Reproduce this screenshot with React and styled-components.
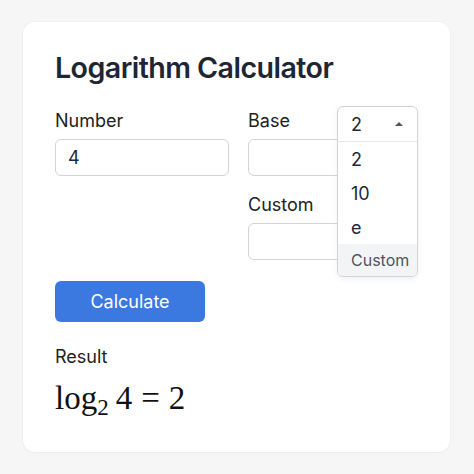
import React from 'react';
import styled, { createGlobalStyle } from 'styled-components';

const Global = createGlobalStyle`
  html, body {
    margin: 0;
    padding: 0;
    background: #f6f6f6;
  }
  * { box-sizing: border-box; }
`

const Page = styled.div`
  width: 474px;
  height: 474px;
  padding: 22px 24px 22px 23px;
  font-family: Inter, "Noto Sans", sans-serif;
  color: #1f2937;
`

const Card = styled.div`
  width: 427px;
  height: 430px;
  background: #ffffff;
  border-radius: 12px;
  box-shadow: 0 0 0 1px rgba(0, 0, 0, 0.015), 0 1px 3px rgba(0, 0, 0, 0.03);
  padding: 28px 32px;
`

const Title = styled.h1`
  margin: 0;
  font-size: 28.6px;
  line-height: 36px;
  font-weight: 600;
  color: #1e2633;
  letter-spacing: -0.55px;
`

const Grid = styled.div`
  display: grid;
  grid-template-columns: 174px 170px;
  column-gap: 19px;
  margin-top: 24px;
`

const Column = styled.div`
  display: flex;
  flex-direction: column;
  gap: 18px;
`

const Field = styled.div`
  position: relative;
  display: flex;
  flex-direction: column;
`

const Label = styled.label`
  font-size: 18px;
  line-height: 22px;
  color: #222;
  margin-bottom: 7px;
`

const Input = styled.input`
  width: 100%;
  height: 37px;
  border: 1px solid #d4d4d8;
  border-radius: 6px;
  padding: 0 12px;
  font-family: inherit;
  font-size: 18px;
  color: #1f2937;
  background: #fff;
  outline: none;
`

const Dropdown = styled.div`
  position: absolute;
  left: 89px;
  top: -4px;
  width: 81px;
  background: #fff;
  border: 1px solid #d4d4d8;
  border-radius: 6px;
  box-shadow: 0 2px 6px rgba(0, 0, 0, 0.06);
  overflow: hidden;
  z-index: 2;
`

const Selected = styled.div`
  height: 35px;
  display: flex;
  align-items: center;
  justify-content: space-between;
  padding: 0 14px 0 13px;
  font-size: 18px;
  border-bottom: 1px solid #e5e7eb;
`

const Caret = styled.span`
  width: 0;
  height: 0;
  border-left: 4px solid transparent;
  border-right: 4px solid transparent;
  border-bottom: 4px solid #555;
`

const Option = styled.div`
  height: ${p => (p.$small ? '32px' : '34px')};
  display: flex;
  align-items: center;
  padding: 0 13px;
  font-size: ${p => (p.$small ? '16px' : '18px')};
  color: ${p => (p.$small ? '#4b5563' : '#1f2937')};
  background: ${p => (p.$active ? '#f3f4f6' : '#fff')};
`

const Button = styled.button`
  margin-top: 21px;
  width: 150px;
  height: 41px;
  border: none;
  border-radius: 6px;
  background: #3b78e0;
  color: #fff;
  font-family: inherit;
  font-size: 18px;
  cursor: pointer;
`

const ResultLabel = styled.div`
  margin-top: 24px;
  font-size: 18px;
  line-height: 22px;
  color: #222;
`

const Formula = styled.div`
  margin-top: 10px;
  font-family: "Liberation Serif", "Times New Roman", serif;
  font-size: 33px;
  line-height: 40px;
  color: #111;
  white-space: nowrap;
`

const Sub = styled.sub`
  font-size: 23px;
  vertical-align: -6px;
  line-height: 0;
  margin-right: 7px;
`

const Op = styled.span`
  margin: 0 9px;
`

export default function App() {
  return (
    <Page>
      <Global />
      <Card>
        <Title>Logarithm Calculator</Title>
        <Grid>
          <Column>
            <Field>
              <Label>Number</Label>
              <Input defaultValue="4" />
            </Field>
          </Column>
          <Column>
            <Field>
              <Label>Base</Label>
              <Input />
              <Dropdown>
                <Selected>
                  <span>2</span>
                  <Caret />
                </Selected>
                <Option>2</Option>
                <Option>10</Option>
                <Option>e</Option>
                <Option $small $active>Custom</Option>
              </Dropdown>
            </Field>
            <Field>
              <Label>Custom</Label>
              <Input />
            </Field>
          </Column>
        </Grid>
        <Button>Calculate</Button>
        <ResultLabel>Result</ResultLabel>
        <Formula>
          log<Sub>2</Sub>4<Op>=</Op>2
        </Formula>
      </Card>
    </Page>
  );
}
